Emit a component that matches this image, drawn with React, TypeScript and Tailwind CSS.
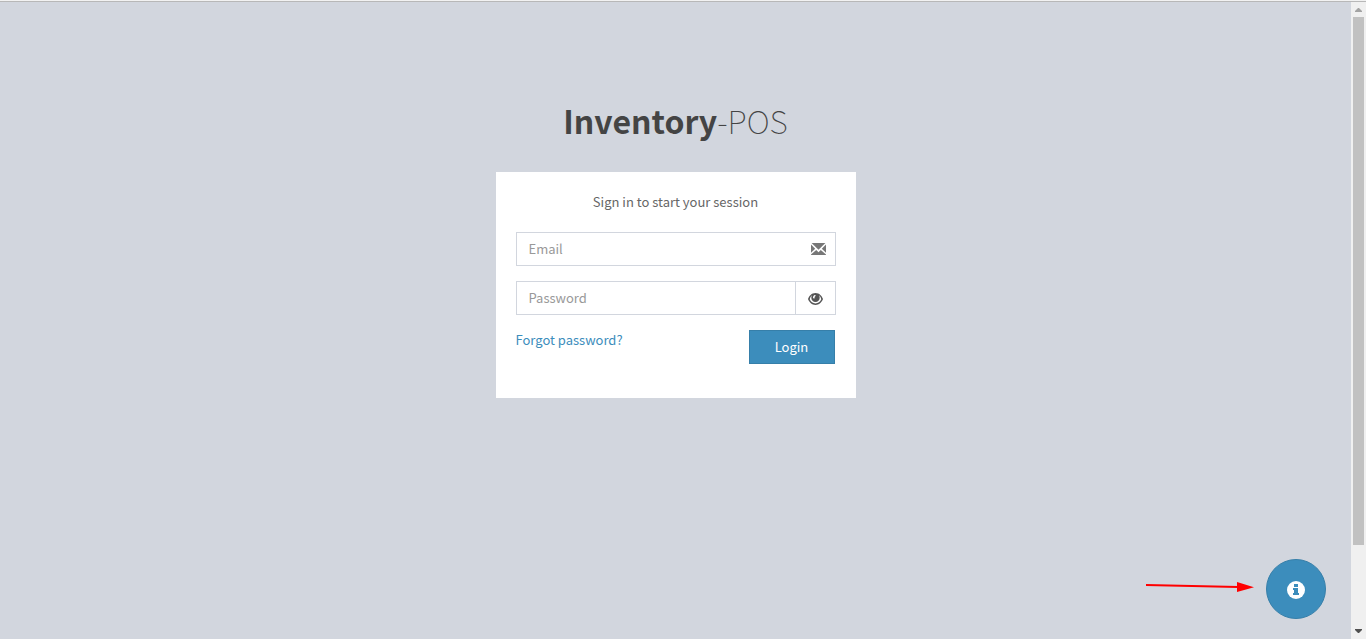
import { useState } from 'react';

function EnvelopeIcon() {
  return (
    <svg viewBox="0 0 15 12" className="h-3 w-[15px]" fill="#777777" aria-hidden="true">
      <path d="M0.6 0H14.400L7.500 6.800z" />
      <path d="M0 1.600L4.200 5.800L0 9.800z" />
      <path d="M15 1.600L10.800 5.800L15 9.800z" />
      <path d="M5.200 7L7.500 9.200L9.800 7L15 11.500V12H0V11.500z" />
    </svg>
  );
}

function EyeIcon() {
  return (
    <svg viewBox="0 0 15 12" className="h-3 w-[15px]" aria-hidden="true">
      <path
        fill="#555555"
        fillRule="evenodd"
        d="M7.500 0C3.600 0 1.100 3 0 6C1.200 9.200 4 12 7.500 12S13.800 9.200 15 6C13.900 3 11.400 0 7.500 0zM7.500 10.400C4.800 10.400 2.800 8.500 1.700 6.200C2.200 4.600 2.800 3.300 4 2.300C3.500 3 3.300 3.900 3.300 4.800C3.300 7.200 5.200 9 7.500 9S11.700 7.200 11.700 4.800C11.700 3.900 11.500 3 11 2.300C12.200 3.300 12.800 4.600 13.300 6.200C12.200 8.500 10.200 10.400 7.500 10.400z"
      />
      <path d="M5 4.700C4.900 3.200 5.700 2 7 1.900C7.800 1.900 7.900 2.900 7.300 3.200C6.600 3.500 6.600 4.200 6.600 4.900C6.600 5.800 5.100 5.700 5 4.700z" fill="#ffffff" />
    </svg>
  );
}

function InfoIcon() {
  return (
    <svg viewBox="0 0 18 18" className="h-[18px] w-[18px]" aria-hidden="true">
      <circle cx="9" cy="9" r="9" fill="#ffffff" />
      <path fill="#3c8dbc" d="M7 3H11V6H7zM6 7H11V12H12V14H6V12H7V9H6z" />
    </svg>
  );
}

function ScrollRail() {
  return (
    <div className="flex w-[15px] shrink-0 flex-col items-center bg-[#f0f0f0] py-1.5" aria-hidden="true">
      <svg viewBox="0 0 7 4" className="h-1 w-[7px]" fill="#a3a3a3">
        <path d="M3 0H4L7 3V4H0V3z" />
      </svg>
      <div className="mt-[5px] w-[11px] grow bg-[#c1c1c1]" />
      <div className="h-[84px]" />
      <svg viewBox="0 0 7 4" className="h-1 w-[7px]" fill="#505050">
        <path d="M0 0H7V1L4 4H3L0 1z" />
      </svg>
    </div>
  );
}

export default function App() {
  const [visible, setVisible] = useState(false);

  return (
    <div className="flex h-screen flex-col border-t border-[#f2f2f2] font-['Noto_Sans_CJK_SC','Noto_Sans',sans-serif] text-[13px] leading-5">
      <div className="flex grow border-t border-[#b8b8b8]">
        <main className="relative grow bg-[#d2d6de] px-4 pt-[93px]">
          <div className="mx-auto w-full max-w-[360px]">
            <h1 className="mb-[27px] text-center text-[32px] leading-[50px] font-thin text-[#444444]">
              <a href="#home">
                <b className="font-bold">Inventory</b>-POS
              </a>
            </h1>
            <form className="bg-white px-5 pt-5 pb-[34px] text-[#666666]" onSubmit={(e) => e.preventDefault()}>
              <p className="mb-5 text-center">Sign in to start your session</p>
              <div className="mb-[15px] flex h-[34px] border border-[#d2d6de] pr-[9px]">
                <input
                  type="email"
                  aria-label="Email"
                  placeholder="Email"
                  className="min-w-0 grow px-3 outline-none placeholder:text-[#999999]"
                />
                <span className="flex items-center">
                  <EnvelopeIcon />
                </span>
              </div>
              <div className="mb-[15px] flex h-[34px] border border-[#d2d6de]">
                <input
                  type={visible ? 'text' : 'password'}
                  aria-label="Password"
                  placeholder="Password"
                  className="min-w-0 grow px-3 outline-none placeholder:text-[#999999]"
                />
                <button
                  type="button"
                  aria-label="Show password"
                  onClick={() => setVisible(!visible)}
                  className="flex w-10 items-center justify-center border-l border-[#d2d6de] pt-0.5"
                >
                  <EyeIcon />
                </button>
              </div>
              <div className="flex items-start justify-between pr-px">
                <a href="#forgot" className="text-[#3c8dbc]">
                  Forgot password?
                </a>
                <button type="submit" className="h-[34px] w-[86px] border border-[#367fa9] bg-[#3c8dbc] text-white">
                  Login
                </button>
              </div>
            </form>
          </div>
          <div className="absolute right-[25px] bottom-5 flex items-center gap-3">
            <svg viewBox="0 0 108 14" className="h-3.5 w-[108px]" aria-hidden="true">
              <path d="M0 3L92 5" stroke="#ff0000" strokeWidth="2" />
              <path d="M91 0L108 5.200L91 10z" fill="#ff0000" />
            </svg>
            <button
              type="button"
              aria-label="Information"
              className="flex h-[60px] w-[60px] items-center justify-center rounded-full border border-[#367fa9] bg-[#3c8dbc] pt-0.5"
            >
              <InfoIcon />
            </button>
          </div>
        </main>
        <ScrollRail />
      </div>
    </div>
  );
}
